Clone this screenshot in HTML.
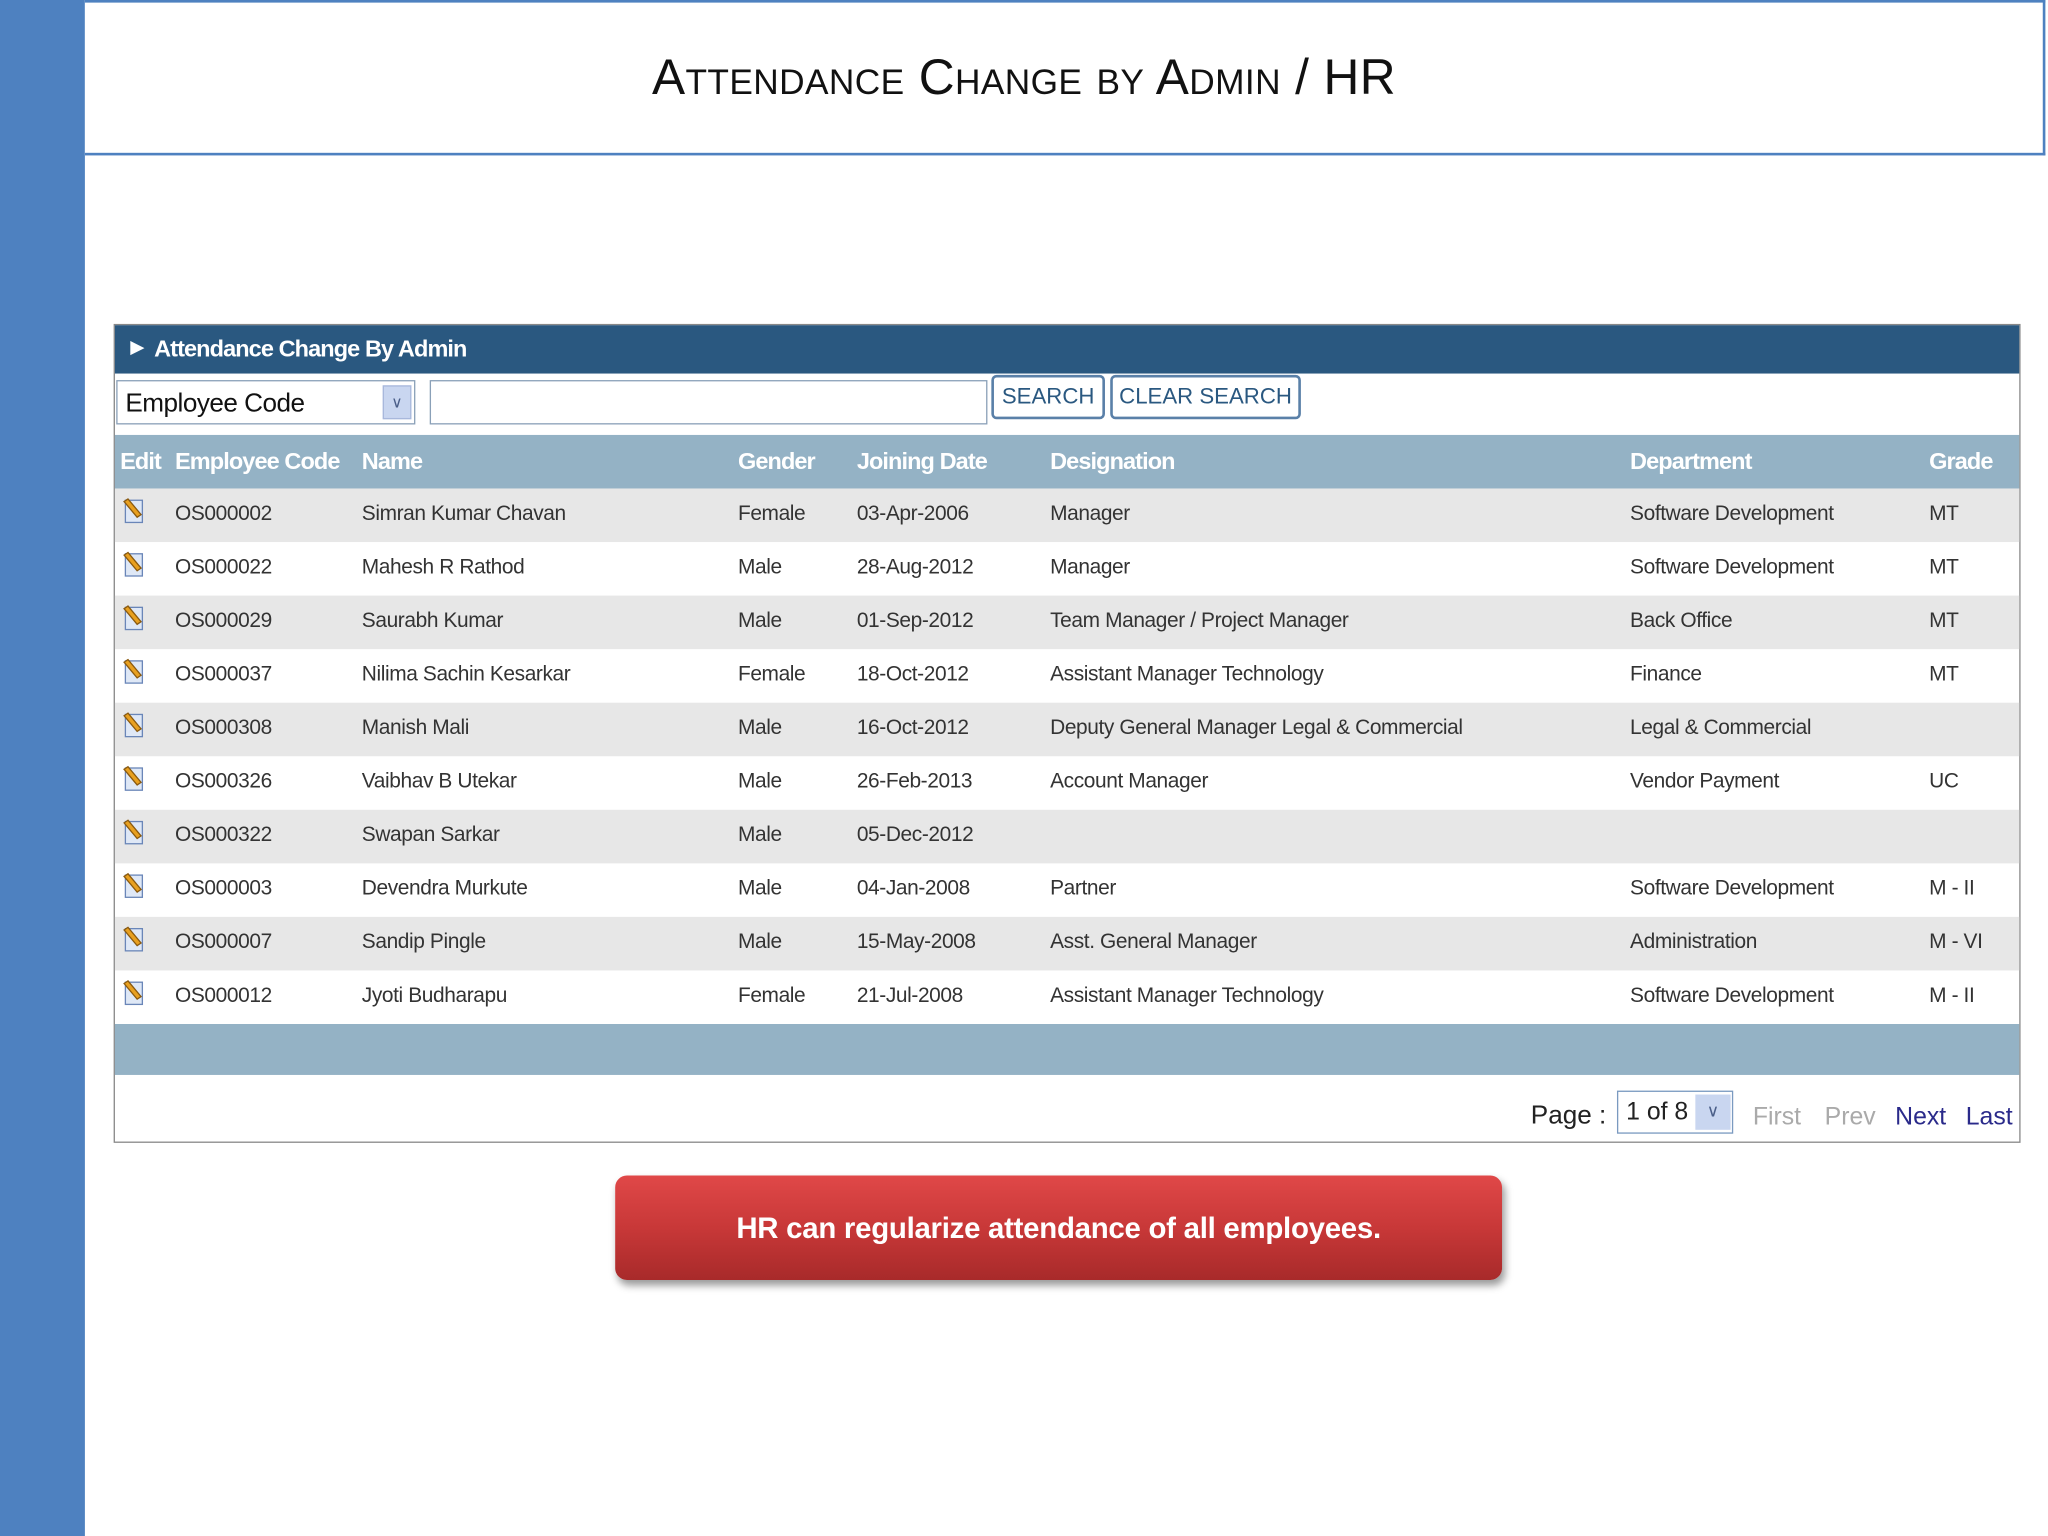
<!DOCTYPE html>
<html><head><meta charset="utf-8"><style>
html,body{margin:0;padding:0;width:2048px;height:1536px;overflow:hidden;background:#fff}
#s{position:absolute;left:0;top:0;width:1568px;height:1176px;transform:scale(1.30612);transform-origin:0 0;font-family:"Liberation Sans",sans-serif}
.a{position:absolute;white-space:nowrap}
.bar{left:0;top:0;width:65px;height:1176px;background:#4e81c0}
.title{left:65px;top:0;width:1499px;height:115px;border:2px solid #4e81c0;border-left:none;background:#fff}
.title div{position:absolute;left:0;width:1438px;top:37px;text-align:center;font-size:38px;font-variant:small-caps;color:#111;letter-spacing:0.3px}
.panel{left:87px;top:248px;width:1458px;height:625px;border:1px solid #888;background:#fff}
.hd{left:0;top:0;width:1458px;height:37px;background:#2a5880;color:#fff;font-size:18px;font-weight:bold}
.row{left:0;width:1458px;height:41px;font-size:16px;color:#333}
.row span{position:absolute;top:11px;letter-spacing:-0.3px}
.th{background:#94b2c5;color:#fff;font-size:18px;font-weight:bold;letter-spacing:-0.6px}
.th span{top:10px;letter-spacing:-0.7px}
.g{background:#e7e7e7}
.btn{height:34px;border:2px solid #5a80a8;border-radius:4px;background:#fff;color:#2a5880;font-size:17px;box-sizing:border-box;text-align:center;line-height:30px}
.ic{position:absolute;left:5px;top:7px;width:17px;height:20px}
</style></head><body><div id="s">
<div class="a bar"></div>
<div class="a title"><div>Attendance Change by Admin / HR</div></div>

<div class="a panel">
 <div class="a hd"><span class="a" style="left:12px;top:9px;font-size:13px">&#9654;</span><span class="a" style="left:30px;top:8px;letter-spacing:-0.7px">Attendance Change By Admin</span></div>
 <div class="a" style="left:1px;top:42px;width:229px;height:34px;border:1px solid #8aa0b8;box-sizing:border-box;background:#fff"><span class="a" style="left:6px;top:6px;font-size:20px;color:#111;letter-spacing:-0.4px">Employee Code</span><div class="a" style="left:203px;top:3px;width:22px;height:26px;background:#c9d6f0;border:1px solid #a8b8dc;box-sizing:border-box;color:#4a5e88;font-size:12px;text-align:center;line-height:24px">&#8744;</div></div>
 <div class="a" style="left:241px;top:42px;width:427px;height:34px;border:1px solid #8aa0b8;box-sizing:border-box"></div>
 <div class="a btn" style="left:671px;top:38px;width:87px">SEARCH</div>
 <div class="a btn" style="left:762px;top:38px;width:146px">CLEAR SEARCH</div>

 <div class="a row th" style="top:84px"><span style="left:4px">Edit</span><span style="left:46px">Employee Code</span><span style="left:189px">Name</span><span style="left:477px">Gender</span><span style="left:568px">Joining Date</span><span style="left:716px">Designation</span><span style="left:1160px">Department</span><span style="left:1389px">Grade</span></div>

 <div class="a row g" style="top:125px"><svg class="ic"><rect x="3" y="2" width="13" height="17" fill="#dfe8f6" stroke="#6a86b8"/><path d="M2 3 L12 15 L15 13 L5 1Z" fill="#e8a020" stroke="#8a5a10"/></svg><span style="left:46px">OS000002</span><span style="left:189px">Simran Kumar Chavan</span><span style="left:477px">Female</span><span style="left:568px">03-Apr-2006</span><span style="left:716px">Manager</span><span style="left:1160px">Software Development</span><span style="left:1389px">MT</span></div>
 <div class="a row" style="top:166px"><svg class="ic"><rect x="3" y="2" width="13" height="17" fill="#dfe8f6" stroke="#6a86b8"/><path d="M2 3 L12 15 L15 13 L5 1Z" fill="#e8a020" stroke="#8a5a10"/></svg><span style="left:46px">OS000022</span><span style="left:189px">Mahesh R Rathod</span><span style="left:477px">Male</span><span style="left:568px">28-Aug-2012</span><span style="left:716px">Manager</span><span style="left:1160px">Software Development</span><span style="left:1389px">MT</span></div>
 <div class="a row g" style="top:207px"><svg class="ic"><rect x="3" y="2" width="13" height="17" fill="#dfe8f6" stroke="#6a86b8"/><path d="M2 3 L12 15 L15 13 L5 1Z" fill="#e8a020" stroke="#8a5a10"/></svg><span style="left:46px">OS000029</span><span style="left:189px">Saurabh Kumar</span><span style="left:477px">Male</span><span style="left:568px">01-Sep-2012</span><span style="left:716px">Team Manager / Project Manager</span><span style="left:1160px">Back Office</span><span style="left:1389px">MT</span></div>
 <div class="a row" style="top:248px"><svg class="ic"><rect x="3" y="2" width="13" height="17" fill="#dfe8f6" stroke="#6a86b8"/><path d="M2 3 L12 15 L15 13 L5 1Z" fill="#e8a020" stroke="#8a5a10"/></svg><span style="left:46px">OS000037</span><span style="left:189px">Nilima Sachin Kesarkar</span><span style="left:477px">Female</span><span style="left:568px">18-Oct-2012</span><span style="left:716px">Assistant Manager Technology</span><span style="left:1160px">Finance</span><span style="left:1389px">MT</span></div>
 <div class="a row g" style="top:289px"><svg class="ic"><rect x="3" y="2" width="13" height="17" fill="#dfe8f6" stroke="#6a86b8"/><path d="M2 3 L12 15 L15 13 L5 1Z" fill="#e8a020" stroke="#8a5a10"/></svg><span style="left:46px">OS000308</span><span style="left:189px">Manish Mali</span><span style="left:477px">Male</span><span style="left:568px">16-Oct-2012</span><span style="left:716px">Deputy General Manager Legal &amp; Commercial</span><span style="left:1160px">Legal &amp; Commercial</span></div>
 <div class="a row" style="top:330px"><svg class="ic"><rect x="3" y="2" width="13" height="17" fill="#dfe8f6" stroke="#6a86b8"/><path d="M2 3 L12 15 L15 13 L5 1Z" fill="#e8a020" stroke="#8a5a10"/></svg><span style="left:46px">OS000326</span><span style="left:189px">Vaibhav B Utekar</span><span style="left:477px">Male</span><span style="left:568px">26-Feb-2013</span><span style="left:716px">Account Manager</span><span style="left:1160px">Vendor Payment</span><span style="left:1389px">UC</span></div>
 <div class="a row g" style="top:371px"><svg class="ic"><rect x="3" y="2" width="13" height="17" fill="#dfe8f6" stroke="#6a86b8"/><path d="M2 3 L12 15 L15 13 L5 1Z" fill="#e8a020" stroke="#8a5a10"/></svg><span style="left:46px">OS000322</span><span style="left:189px">Swapan Sarkar</span><span style="left:477px">Male</span><span style="left:568px">05-Dec-2012</span></div>
 <div class="a row" style="top:412px"><svg class="ic"><rect x="3" y="2" width="13" height="17" fill="#dfe8f6" stroke="#6a86b8"/><path d="M2 3 L12 15 L15 13 L5 1Z" fill="#e8a020" stroke="#8a5a10"/></svg><span style="left:46px">OS000003</span><span style="left:189px">Devendra Murkute</span><span style="left:477px">Male</span><span style="left:568px">04-Jan-2008</span><span style="left:716px">Partner</span><span style="left:1160px">Software Development</span><span style="left:1389px">M - II</span></div>
 <div class="a row g" style="top:453px"><svg class="ic"><rect x="3" y="2" width="13" height="17" fill="#dfe8f6" stroke="#6a86b8"/><path d="M2 3 L12 15 L15 13 L5 1Z" fill="#e8a020" stroke="#8a5a10"/></svg><span style="left:46px">OS000007</span><span style="left:189px">Sandip Pingle</span><span style="left:477px">Male</span><span style="left:568px">15-May-2008</span><span style="left:716px">Asst. General Manager</span><span style="left:1160px">Administration</span><span style="left:1389px">M - VI</span></div>
 <div class="a row" style="top:494px"><svg class="ic"><rect x="3" y="2" width="13" height="17" fill="#dfe8f6" stroke="#6a86b8"/><path d="M2 3 L12 15 L15 13 L5 1Z" fill="#e8a020" stroke="#8a5a10"/></svg><span style="left:46px">OS000012</span><span style="left:189px">Jyoti Budharapu</span><span style="left:477px">Female</span><span style="left:568px">21-Jul-2008</span><span style="left:716px">Assistant Manager Technology</span><span style="left:1160px">Software Development</span><span style="left:1389px">M - II</span></div>
 <div class="a" style="left:0;top:535px;width:1458px;height:39px;background:#94b2c5"></div>

 <span class="a" style="left:1084px;top:594px;font-size:20px;color:#222">Page :</span>
 <div class="a" style="left:1150px;top:586px;width:89px;height:33px;border:1px solid #7a9ac0;box-sizing:border-box"><span class="a" style="left:6px;top:5px;font-size:19px;color:#222">1 of 8</span><div class="a" style="left:59px;top:2px;width:27px;height:27px;background:#c9d6f0;color:#4a5e88;font-size:13px;text-align:center;line-height:25px">&#8744;</div></div>
 <span class="a" style="left:1254px;top:596px;font-size:19px;color:#aaa">First</span>
 <span class="a" style="left:1309px;top:596px;font-size:19px;color:#aaa">Prev</span>
 <span class="a" style="left:1363px;top:596px;font-size:19px;color:#2a2a8a">Next</span>
 <span class="a" style="left:1417px;top:596px;font-size:19px;color:#2a2a8a">Last</span>
</div>

<div class="a" style="left:471px;top:900px;width:679px;height:80px;border-radius:9px;background:linear-gradient(#e04848,#c83838 50%,#a82a2a);box-shadow:2px 4px 6px rgba(0,0,0,0.4);color:#fff;font-size:22.5px;font-weight:bold;text-align:center;line-height:82px;letter-spacing:-0.2px">HR can regularize attendance of all employees.</div>
</div></body></html>
